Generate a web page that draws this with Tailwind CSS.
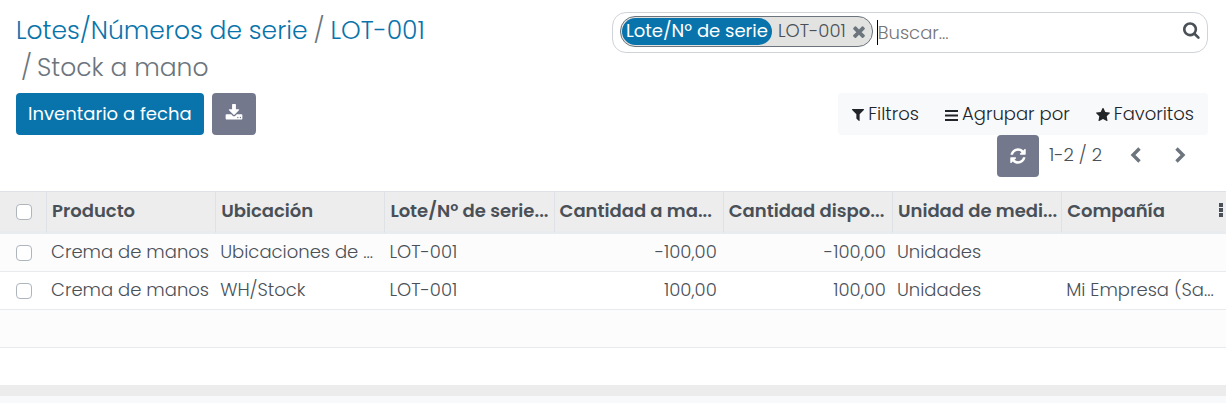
<!DOCTYPE html>
<html lang="es">
<head>
<meta charset="utf-8">
<meta name="viewport" content="width=device-width, initial-scale=1">
<title>Stock a mano</title>
<script src="https://cdn.jsdelivr.net/npm/@tailwindcss/browser@4"></script>
</head>
<body class="min-h-screen bg-[#f8f9fa] font-['Poppins','Inter',sans-serif] text-[18px] font-light text-[#495057]">
<header class="flex bg-white pb-[14px]">
  <div class="min-w-0 flex-1 pl-4">
    <nav aria-label="Ruta" class="pt-3 text-[25px] leading-[37px] whitespace-nowrap text-[#6c757d]">
      <div class="flex gap-[6px]"><a href="#" class="text-[#0874ab]">Lotes/Números de serie</a><span>/</span><a href="#" class="text-[#0874ab]">LOT-001</a></div>
      <div class="flex gap-[5px] pl-[5px]"><span>/</span><span>Stock a mano</span></div>
    </nav>
    <div class="mt-[7px] flex gap-2">
      <button class="h-[42px] rounded bg-[#0874ab] px-3 pb-0.5 font-normal text-white">Inventario a fecha</button>
      <button aria-label="Exportar" class="flex h-[42px] w-[44px] items-center justify-center rounded bg-[#74788d] pb-0.5 text-white">
        <svg class="size-[18px]" viewBox="0 0 1792 1792" fill="currentColor"><path d="M1344 1344q0-26-19-45t-45-19-45 19-19 45 19 45 45 19 45-19 19-45zm256 0q0-26-19-45t-45-19-45 19-19 45 19 45 45 19 45-19 19-45zm128-224v320q0 40-28 68t-68 28h-1472q-40 0-68-28t-28-68v-320q0-40 28-68t68-28h465l135 136q58 56 136 56t136-56l136-136h464q40 0 68 28t28 68zm-325-569q17 41-14 70l-448 448q-18 19-45 19t-45-19l-448-448q-31-29-14-70 17-39 59-39h256v-448q0-26 19-45t45-19h256q26 0 45 19t19 45v448h256q42 0 59 39z"/></svg>
      </button>
    </div>
  </div>
  <div class="min-w-0 flex-1 pt-3 pr-[18px]">
    <div class="flex h-[41px] items-center rounded-[14px] border border-[#ced4da] pr-[6px] pl-[7px]">
      <div class="mb-0.5 flex h-[31px] shrink-0 items-center rounded-[15px] border border-[#6c757d] bg-[#e2e2e0] p-px">
        <span class="flex h-[27px] items-center rounded-[14px] bg-[#0874ab] px-1 pb-0.5 font-normal text-white">Lote/Nº de serie</span>
        <span class="px-[6px] pb-0.5">LOT-001</span>
        <button aria-label="Quitar filtro" class="pr-[5px] text-[#6c757d]"><svg class="size-[14px]" viewBox="190 240 1412 1412" fill="currentColor"><path d="M1490 1322q0 40-28 68l-136 136q-28 28-68 28t-68-28l-294-294-294 294q-28 28-68 28t-68-28l-136-136q-28-28-28-68t28-68l294-294-294-294q-28-28-28-68t28-68l136-136q28-28 68-28t68 28l294 294 294-294q28-28 68-28t68 28l136 136q28 28 28 68t-28 68l-294 294 294 294q28 28 28 68z"/></svg></button>
      </div>
      <span class="ml-1 h-[25px] w-px bg-black"></span>
      <input type="text" aria-label="Buscar" placeholder="Buscar..." class="min-w-0 flex-1 outline-none placeholder:text-[#757575]">
      <button aria-label="Buscar" class="pb-[6px] text-[#495057]"><svg class="size-[18px]" viewBox="0 0 1792 1792" fill="currentColor"><path d="M1152 832q0-185-131.5-316.5t-316.5-131.5-316.5 131.5-131.5 316.5 131.5 316.5 316.5 131.5 316.5-131.5 131.5-316.5zm512 832q0 52-38 90t-90 38q-54 0-90-38l-343-342q-179 124-399 124-143 0-273.5-55.5t-225-150-150-225-55.5-273.5 55.5-273.5 150-225 225-150 273.5-55.5 273.5 55.5 225 150 150 225 55.5 273.5q0 220-124 399l343 343q37 37 37 90z"/></svg></button>
    </div>
    <div class="mt-10 flex justify-end">
      <div class="flex h-[42px] items-center gap-[26px] rounded bg-[#f8f9fa] px-[14px] pb-0.5 text-[#212529]">
        <button class="flex items-center gap-1"><svg class="mt-1 size-3" viewBox="192 256 1408 1408" fill="currentColor"><path d="M1595 295q17 41-14 70l-493 493v742q0 42-39 59-13 5-25 5-27 0-45-19l-256-256q-19-19-19-45v-486l-493-493q-31-29-14-70 17-39 59-39h1280q42 0 59 39z"/></svg>Filtros</button>
        <button class="flex items-center gap-1"><svg class="mt-1 h-[11px] w-[13px]" viewBox="0 0 13 11" fill="currentColor"><path d="M0 0h13v2H0zM0 4.500h13v2H0zM0 9h13v2H0z"/></svg>Agrupar por</button>
        <button class="flex items-center gap-1"><svg class="mt-1 size-[14px]" viewBox="64 64 1664 1664" fill="currentColor"><path d="M1728 647q0 22-26 48l-363 354 86 500q1 7 1 20 0 21-10.5 35.5t-30.5 14.500q-19 0-40-12l-449-236-449 236q-22 12-40 12-21 0-31.500-14.500t-10.500-35.500q0-6 2-20l86-500-364-354q-25-27-25-48 0-37 56-46l502-73 225-455q19-41 49-41t49 41l225 455 502 73q56 9 56 46z"/></svg>Favoritos</button>
      </div>
    </div>
    <div class="flex items-center justify-end pr-[6px]">
      <button aria-label="Actualizar" class="flex size-[42px] items-center justify-center rounded bg-[#74788d] text-white"><svg class="size-[18px]" viewBox="0 0 1792 1792" fill="currentColor"><path d="M1639 1056q0 5-1 7-64 268-268 434.500t-478 166.500q-146 0-282.500-55t-243.500-157l-129 129q-19 19-45 19t-45-19-19-45v-448q0-26 19-45t45-19h448q26 0 45 19t19 45-19 45l-137 137q71 66 161 102t187 36q134 0 250-65t186-179q11-17 53-117 8-23 30-23h192q13 0 22.500 9.500t9.500 22.500zm25-800v448q0 26-19 45t-45 19h-448q-26 0-45-19t-19-45 19-45l138-138q-148-137-349-137-134 0-250 65t-186 179q-11 17-53 117-8 23-30 23h-199q-13 0-22.500-9.500t-9.500-22.500v-7q65-268 270-434.500t480-166.500q146 0 284 55.500t245 156.500l130-129q19-19 45-19t45 19 19 45z"/></svg></button>
      <span class="w-[74px] pb-[3px] pl-[10px] whitespace-nowrap">1-2 / 2</span>
      <button aria-label="Anterior" class="flex h-[42px] w-[45px] items-center justify-center pb-0.5 text-[#6c757d]"><svg class="h-4 w-[11px]" viewBox="0 0 11 16" fill="none" stroke="currentColor" stroke-width="3.400"><path d="M9.500 1.500L3 8l6.500 6.500"/></svg></button>
      <button aria-label="Siguiente" class="flex h-[42px] w-[44px] items-center justify-center pb-0.5 text-[#6c757d]"><svg class="h-4 w-[11px]" viewBox="0 0 11 16" fill="none" stroke="currentColor" stroke-width="3.400"><path d="M1.500 1.500L8 8l-6.500 6.500"/></svg></button>
    </div>
  </div>
</header>
<main class="border-b-[11px] border-[#ececec] bg-white">
  <table class="w-full table-fixed border-separate border-spacing-0 text-left whitespace-nowrap">
    <colgroup><col class="w-[46px]"><col class="w-[13.8%]"><col class="w-[13.8%]"><col class="w-[13.8%]"><col class="w-[13.8%]"><col class="w-[13.8%]"><col class="w-[13.8%]"><col></colgroup>
    <thead class="bg-[#ededed]">
      <tr class="h-[43px] *:border-t *:border-b-[3px] *:border-t-[#dee2e6] *:border-b-[#e9ecef] [&>th+th]:border-l [&>th+th]:border-l-[#dee2e6] [&>th+th]:pb-[3px] [&>th+th]:pl-[5px] *:font-semibold">
        <th class="pl-4"><input type="checkbox" aria-label="Seleccionar todo" class="block size-4 appearance-none rounded border border-[#adb5bd] bg-white"></th>
        <th>Producto</th><th>Ubicación</th><th>Lote/Nº de serie...</th><th>Cantidad a ma...</th><th>Cantidad dispo...</th><th>Unidad de medi...</th>
        <th><div class="flex items-center justify-between pr-0.5">Compañía<button aria-label="Columnas opcionales"><svg class="h-[14px] w-[6px]" viewBox="0 0 6 14" fill="currentColor"><path d="M1 0h4v4H1zM1 5h4v4H1zM1 10h4v4H1z"/></svg></button></div></th>
      </tr>
    </thead>
    <tbody class="[&_td]:border-b [&_td]:border-[#e9ecef] [&_td+td]:pr-[6px] [&_td+td]:pl-[5px] [&_td+td]:pb-0.5 [&>tr:last-child>td]:border-b-0">
      <tr class="h-[38px] bg-[#fcfcfc]"><td class="pl-4"><input type="checkbox" aria-label="Seleccionar fila 1" class="block size-4 appearance-none rounded border border-[#adb5bd] bg-white"></td><td>Crema de manos</td><td>Ubicaciones de ...</td><td>LOT-001</td><td class="text-right">-100,00</td><td class="text-right">-100,00</td><td>Unidades</td><td></td></tr>
      <tr class="h-[38px]"><td class="pl-4"><input type="checkbox" aria-label="Seleccionar fila 2" class="block size-4 appearance-none rounded border border-[#adb5bd] bg-white"></td><td>Crema de manos</td><td>WH/Stock</td><td>LOT-001</td><td class="text-right">100,00</td><td class="text-right">100,00</td><td>Unidades</td><td>Mi Empresa (Sa...</td></tr>
      <tr class="h-[38px] bg-[#fcfcfc]"><td colspan="8"></td></tr>
      <tr class="h-[37px]"><td colspan="8"></td></tr>
    </tbody>
  </table>
</main>
</body>
</html>
